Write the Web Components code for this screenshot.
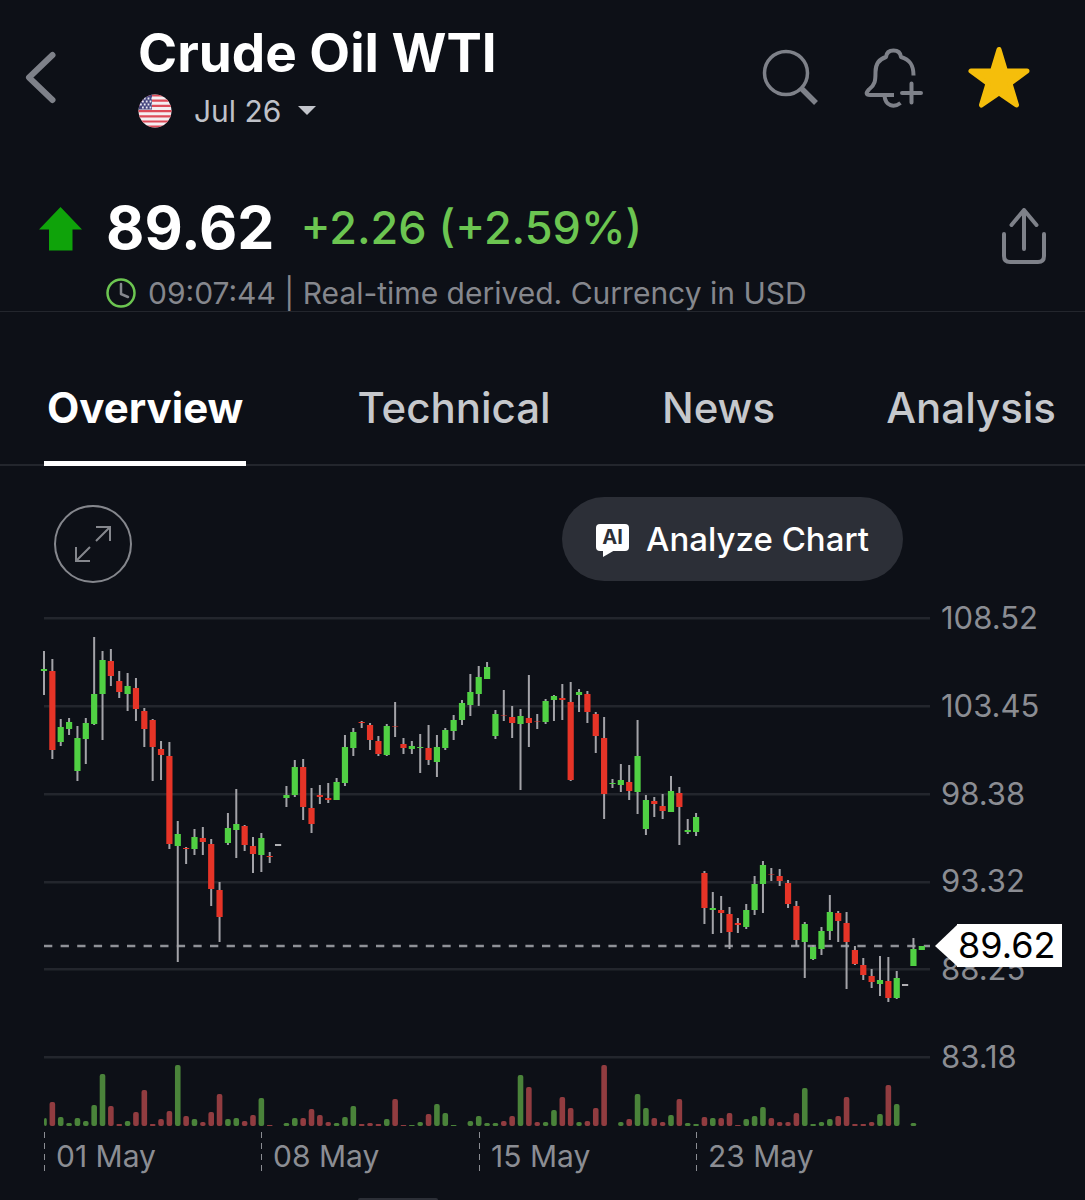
<!DOCTYPE html>
<html lang="en">
<head>
<meta charset="utf-8">
<meta name="viewport" content="width=device-width, initial-scale=1">
<title>Crude Oil WTI</title>
<style>
    body {
        margin: 0;
        background: #0d1017;
        color: #fff;
        font-family: Inter, "Liberation Sans", sans-serif;
    }
</style>
</head>
<body>
<quote-page></quote-page>

<script>
const RESET = `
    * { box-sizing: border-box; }
    button {
        margin: 0;
        padding: 0;
        border: 0;
        background: none;
        color: inherit;
        font: inherit;
        cursor: pointer;
    }
    svg { display: block; }
`;

class InstrumentHeader extends HTMLElement {
    constructor() {
        super();
        this.attachShadow({ mode: 'open' });
    }

    connectedCallback() {
        this.shadowRoot.innerHTML = `
            <style>
                ${RESET}
                :host {
                    display: flex;
                    align-items: center;
                    padding: 20px 55px 20px 24px;
                }
                .back { width: 34px; }
                .title {
                    flex: 1;
                    margin-left: 80px;
                }
                h1 {
                    margin: 0;
                    font-size: 53px;
                    line-height: 66px;
                    font-weight: 700;
                    white-space: nowrap;
                }
                .contract {
                    display: flex;
                    align-items: center;
                    height: 50px;
                    color: #bfc1c8;
                    font-size: 30px;
                    line-height: 36px;
                }
                .contract .flag { margin-right: 22px; }
                .contract .caret { margin-left: 17px; }
                .actions {
                    display: flex;
                    align-items: center;
                    gap: 44px;
                }
            </style>
            <button class="back" aria-label="Back">
                <svg width="34" height="56" viewBox="0 0 34 56" fill="none" stroke="#7e8189" stroke-width="6" stroke-linecap="round" stroke-linejoin="round">
                    <path d="M28.500 5 5 27.500 28.500 50"/>
                </svg>
            </button>
            <div class="title">
                <h1><slot name="name"></slot></h1>
                <button class="contract">
                    <svg class="flag" width="34" height="34" viewBox="0 0 34 34">
                        <clipPath id="round"><circle cx="17" cy="17" r="16.500"/></clipPath>
                        <g clip-path="url(#round)">
                            <path fill="#f4eef1" d="M0 0h34v34H0z"/>
                            <path stroke="#dd4a58" stroke-width="2.200" d="M0 1.500h34M0 6.700h34M0 11.900h34M0 17.100h34M0 22.300h34M0 27.500h34M0 32.700h34"/>
                            <path fill="#46467f" d="M0 0h14v15.500H0z"/>
                            <path stroke="#e8e8f2" stroke-width="1.800" stroke-dasharray="1.800 2" d="M2 4.500h12M4 7.500h10M2 10.500h12M4 13.500h10"/>
                        </g>
                    </svg>
                    <slot name="contract"></slot>
                    <svg class="caret" width="18" height="10" viewBox="0 0 18 10"><path fill="#c3c5cc" d="M0 0h18L9 9z"/></svg>
                </button>
            </div>
            <div class="actions">
                <button aria-label="Search">
                    <svg width="58" height="58" viewBox="0 0 58 58" fill="none" stroke="#7e8189">
                        <circle cx="24" cy="24" r="21.500" stroke-width="3.500"/>
                        <path stroke-width="5.500" d="M39 39 54 54"/>
                    </svg>
                </button>
                <button aria-label="Add alert">
                    <svg width="60" height="62" viewBox="0 0 60 62" fill="none" stroke="#7e8189" stroke-width="4" stroke-linecap="round" stroke-linejoin="round">
                        <path stroke-linecap="butt" d="M49.500 28.500C49.500 18 46 12.500 37 10C36.500 5.500 33.500 3.500 29.500 3.500S22.500 5.500 22 10C14 12.500 11.500 18 11.500 25C11.500 34 11 38 5 42.500C1.500 46 2 48 6 48H30"/>
                        <path stroke-linecap="butt" d="M20.500 49C21.500 59 30 61 36.500 56"/>
                        <path d="M47.500 36.500V55.500M38 46H57"/>
                    </svg>
                </button>
                <button aria-label="Remove from watchlist">
                    <svg width="62" height="64" viewBox="0 0 62 64">
                        <path fill="#f5be0b" stroke="#f5be0b" stroke-width="5" stroke-linejoin="round" d="M31 3.500 37.500 25H59L42 37.500 48.500 59 31 47 13.500 59 20 37.500 3 25H24.500Z"/>
                    </svg>
                </button>
            </div>
        `;
    }
}

class PriceSummary extends HTMLElement {
    constructor() {
        super();
        this.attachShadow({ mode: 'open' });
    }

    connectedCallback() {
        this.shadowRoot.innerHTML = `
            <style>
                ${RESET}
                :host {
                    display: grid;
                    grid-template-columns: 44px 1fr 46px;
                    column-gap: 23px;
                    align-items: center;
                    margin-top: 37px;
                    padding: 0 38px 0 39px;
                    border-bottom: 1px solid #23262d;
                }
                .line {
                    display: flex;
                    align-items: center;
                    height: 72px;
                    padding-bottom: 4px;
                    white-space: nowrap;
                }
                .last {
                    font-size: 59px;
                    font-weight: 700;
                }
                .change {
                    margin-left: 26px;
                    color: #6cc551;
                    font-size: 45px;
                    font-weight: 500;
                }
                .share { margin-top: 14px; }
                .note {
                    grid-column: 2 / 4;
                    display: flex;
                    align-items: center;
                    gap: 12px;
                    height: 36px;
                    margin-top: 10px;
                    color: #85878d;
                    font-size: 30px;
                    line-height: 36px;
                    white-space: nowrap;
                }
            </style>
            <svg width="44" height="44" viewBox="0 0 44 44"><path fill="#0fa30a" d="M21.500 0 43 22.500H33.500V43.500H10V22.500H0Z"/></svg>
            <div class="line">
                <span class="last"><slot name="last"></slot></span>
                <span class="change"><slot name="change"></slot></span>
            </div>
            <button class="share" aria-label="Share">
                <svg width="46" height="58" viewBox="0 0 46 58" fill="none" stroke="#7e8189" stroke-width="4" stroke-linecap="round" stroke-linejoin="round">
                    <path d="M23 42V3M10.500 18 23 3 35.500 18M3 27V49Q3 55 9 55H37Q43 55 43 49V27"/>
                </svg>
            </button>
            <div class="note">
                <svg width="30" height="30" viewBox="0 0 30 30" fill="none">
                    <circle cx="15" cy="15" r="13.500" stroke="#6cc551" stroke-width="2.500"/>
                    <path stroke="#85878d" stroke-width="2.500" stroke-linecap="round" stroke-linejoin="round" d="M15 6V16L22 19"/>
                </svg>
                <slot name="note"></slot>
            </div>
        `;
    }
}

class TabBar extends HTMLElement {
    constructor() {
        super();
        this.attachShadow({ mode: 'open' });
    }

    connectedCallback() {
        this.shadowRoot.innerHTML = `
            <style>
                :host {
                    display: flex;
                    justify-content: space-between;
                    margin-top: 63px;
                    padding: 0 29px 0 44px;
                    box-shadow: inset 0 -2px #23262d;
                }
                ::slotted(a) {
                    height: 91px;
                    box-sizing: border-box;
                    border-bottom: 5px solid transparent;
                    color: #c6c8cc;
                    font-size: 42px;
                    line-height: 66px;
                    font-weight: 500;
                    text-decoration: none;
                }
                ::slotted(a[aria-current]) {
                    padding: 0 3px;
                    border-color: #fff;
                    color: #fff;
                    font-weight: 700;
                }
            </style>
            <slot></slot>
        `;
    }
}

class ChartToolbar extends HTMLElement {
    constructor() {
        super();
        this.attachShadow({ mode: 'open' });
    }

    connectedCallback() {
        this.shadowRoot.innerHTML = `
            <style>
                ${RESET}
                :host {
                    display: flex;
                    justify-content: space-between;
                    align-items: flex-start;
                    padding: 31px 182px 15px 53px;
                }
                .expand { margin-top: 8px; }
                .analyze {
                    display: flex;
                    align-items: center;
                    gap: 17px;
                    height: 84px;
                    padding: 0 34px;
                    border-radius: 42px;
                    background: #2c2f37;
                    font-size: 33px;
                    font-weight: 500;
                    white-space: nowrap;
                }
                .ai {
                    position: relative;
                    width: 33px;
                    height: 27px;
                    margin-bottom: 4px;
                    border-radius: 4px;
                    background: #fff;
                    color: #2c2f37;
                    font-size: 20px;
                    line-height: 27px;
                    font-weight: 700;
                    text-align: center;
                }
                .ai svg {
                    position: absolute;
                    left: 7px;
                    top: 26px;
                }
            </style>
            <button class="expand" aria-label="Full screen">
                <svg width="80" height="80" viewBox="0 0 80 80" fill="none" stroke="#85878d" stroke-width="2">
                    <circle cx="40" cy="39" r="38"/>
                    <path d="M43 36 57 22M43 22H57V36M37 42 23 56M23 42V56H37"/>
                </svg>
            </button>
            <button class="analyze">
                <span class="ai">AI<svg width="12" height="7" viewBox="0 0 12 7"><path fill="#fff" d="M0 0H12L0 7Z"/></svg></span>
                <slot></slot>
            </button>
        `;
    }
}

// direction, high, low, body top, body bottom, volume
// heights are in plot units, counted down from the top of the plot
const CANDLES = [
    ['u', 51, 95, 69, 71, 8], ['d', 59, 159, 71, 150, 24], ['u', 119, 146, 127, 142, 9], ['u', 118, 135, 122, 129, 3],
    ['u', 126, 181, 138, 171, 8], ['u', 118, 164, 123, 139, 5], ['u', 37, 125, 94, 124, 21], ['u', 51, 140, 60, 94, 52],
    ['d', 49, 86, 61, 76, 20], ['d', 71, 98, 81, 92, 2], ['u', 73, 111, 86, 94, 5], ['d', 78, 121, 88, 109, 14],
    ['d', 108, 147, 111, 129, 36], ['d', 119, 181, 120, 147, 2], ['d', 141, 180, 149, 155, 7], ['d', 142, 249, 156, 244, 15],
    ['u', 221, 362, 234, 246, 61], ['d', 247, 264, 248, 249, 10], ['u', 229, 255, 237, 249, 7], ['d', 227, 255, 238, 242, 4],
    ['d', 239, 306, 244, 289, 14], ['d', 282, 342, 290, 317, 32], ['u', 213, 245, 228, 243, 7], ['u', 189, 258, 224, 230, 8],
    ['d', 225, 251, 226, 245, 5], ['d', 237, 273, 246, 254, 11], ['u', 233, 272, 238, 255, 28], ['d', 252, 263, 256, 257, 1],
    ['n', 245, 245, 244, 246, 0], ['u', 186, 207, 195, 198, 3], ['u', 160, 197, 167, 195, 8], ['d', 159, 220, 167, 207, 8],
    ['d', 188, 233, 208, 224, 17], ['d', 185, 204, 195, 197, 11], ['d', 183, 203, 198, 200, 4], ['u', 178, 200, 182, 200, 3],
    ['u', 135, 186, 147, 183, 9], ['u', 128, 156, 132, 148, 20], ['d', 121, 128, 122, 123, 2], ['d', 123, 150, 125, 140, 3],
    ['d', 136, 156, 141, 154, 2], ['u', 124, 156, 126, 155, 7], ['d', 102, 137, 126, 126, 27], ['d', 138, 154, 144, 148, 1],
    ['u', 141, 154, 146, 149, 1], ['u', 134, 173, 147, 148, 4], ['d', 125, 165, 148, 160, 12], ['u', 135, 177, 147, 162, 22],
    ['u', 128, 150, 130, 148, 13], ['u', 115, 140, 120, 131, 1], ['u', 100, 125, 103, 120, 0], ['u', 74, 116, 92, 105, 5],
    ['u', 66, 106, 77, 94, 10], ['u', 62, 79, 67, 79, 3], ['u', 110, 139, 114, 136, 3], ['d', 90, 121, 115, 115, 5],
    ['d', 106, 138, 117, 123, 10], ['u', 109, 190, 116, 124, 51], ['d', 75, 147, 118, 123, 39], ['d', 114, 129, 121, 121, 4],
    ['u', 99, 124, 101, 122, 4], ['u', 95, 121, 96, 100, 16], ['d', 84, 120, 98, 100, 29], ['d', 82, 181, 102, 180, 18],
    ['u', 89, 112, 92, 95, 4], ['d', 91, 123, 94, 112, 5], ['d', 112, 153, 114, 136, 18], ['d', 117, 219, 138, 194, 61],
    ['u', 179, 188, 183, 184, 0], ['u', 164, 192, 180, 185, 4], ['d', 165, 200, 182, 191, 7], ['u', 120, 214, 156, 192, 32],
    ['u', 195, 235, 200, 229, 18], ['d', 197, 217, 201, 204, 8], ['d', 194, 219, 206, 211, 4], ['u', 176, 212, 191, 212, 11],
    ['d', 187, 245, 193, 207, 27], ['u', 219, 234, 230, 232, 3], ['u', 213, 236, 217, 232, 2], ['d', 271, 324, 273, 308, 9],
    ['u', 292, 334, 308, 310, 8], ['d', 296, 333, 310, 313, 8], ['d', 307, 349, 314, 332, 13], ['d', 318, 333, 323, 325, 1],
    ['u', 304, 329, 310, 327, 7], ['u', 276, 315, 284, 310, 10], ['u', 261, 313, 265, 284, 19], ['d', 268, 281, 274, 274, 8],
    ['d', 269, 286, 276, 281, 4], ['d', 280, 308, 283, 304, 4], ['d', 301, 346, 306, 340, 13], ['u', 322, 378, 324, 342, 38],
    ['u', 345, 360, 347, 359, 2], ['u', 327, 355, 331, 349, 4], ['u', 295, 340, 312, 331, 7], ['d', 311, 342, 313, 321, 10],
    ['d', 312, 389, 323, 342, 29], ['d', 346, 365, 350, 364, 2], ['d', 358, 380, 365, 375, 2], ['d', 369, 388, 376, 382, 4],
    ['u', 356, 396, 380, 384, 12], ['d', 357, 402, 381, 398, 41], ['u', 371, 399, 378, 398, 22], ['n', 385, 385, 384, 386, 0],
    ['u', 338, 366, 349, 366, 3], ['u', 346, 350, 346, 350, 0]
];
const GRID = [18, 106, 194, 282, 369, 457];
const STEP = 8.36;
const BASE = 526;
const BODY = { u: '#50d043', d: '#e63427', n: '#b0b0b4' };
const VOLUME = { u: '#4a833a', d: '#913c40' };

class CandleChart extends HTMLElement {
    constructor() {
        super();
        this.attachShadow({ mode: 'open' });
    }

    connectedCallback() {
        const prices = this.getAttribute('prices').split(' ');
        const dates = this.getAttribute('dates').split(',');
        this.shadowRoot.innerHTML = `
            <style>
                ${RESET}
                :host {
                    display: grid;
                    grid-template-columns: 1fr 144px;
                    column-gap: 11px;
                    padding-left: 44px;
                    color: #8b8d93;
                    font-size: 30px;
                    line-height: 36px;
                }
                .plot {
                    width: 100%;
                    height: 530px;
                    overflow: visible;
                }
                .scale {
                    position: relative;
                    display: flex;
                    flex-direction: column;
                    justify-content: space-between;
                    height: 475px;
                    font-size: 31px;
                }
                .last {
                    position: absolute;
                    top: 324px;
                    left: -6px;
                    display: flex;
                    color: #000;
                    font-size: 36px;
                    line-height: 43px;
                }
                .last span {
                    padding: 0 7px 0 1px;
                    background: #fff;
                }
                .dates {
                    display: grid;
                    grid-template-columns: 217fr 218fr 217fr 234fr;
                    padding-top: 2px;
                }
                .dates span {
                    height: 40px;
                    padding-left: 12px;
                    line-height: 48px;
                    background: repeating-linear-gradient(#8b8d93 0 6px, transparent 6px 11px) 0 0 / 1px 100% no-repeat;
                }
            </style>
            <svg class="plot" viewBox="0 0 886 530" preserveAspectRatio="none" role="img" aria-label="Price and volume">
                ${GRID.map(y => `<rect y="${y - 1}" width="886" height="2.500" fill="#23262d"/>`).join('')}
                <path d="M0 346H886" stroke="#8f9197" stroke-width="2.500" stroke-dasharray="8.300 8.300"/>
                ${CANDLES.map((c, i) => this.candle(c, i)).join('')}
            </svg>
            <div class="scale">
                ${prices.map(p => `<span>${p}</span>`).join('')}
                <div class="last">
                    <svg width="22" height="43" viewBox="0 0 22 43"><path fill="#fff" d="M0 22 22 1V42Z"/></svg>
                    <span>${this.getAttribute('last')}</span>
                </div>
            </div>
            <div class="dates">
                ${dates.map(d => `<span>${d}</span>`).join('')}
            </div>
        `;
    }

    candle([dir, high, low, top, bottom, volume], i) {
        const x = i * STEP;
        const height = Math.max(bottom - top, 1);
        const left = i ? x - 2.8 : 0;
        const width = i ? 5.6 : 2.8;
        let out = `<rect x="${x - 1}" y="${high}" width="2" height="${low - high}" fill="#a3a3a8"/>
            <rect x="${x - 3.1}" y="${top}" width="6.200" height="${height}" fill="${BODY[dir]}" opacity="${top === bottom ? 0.5 : 1}"/>`;
        if (volume) {
            out += `<rect x="${left}" y="${BASE - volume}" width="${width}" height="${volume}" rx="${Math.min(2, volume / 2)}" fill="${VOLUME[dir]}"/>`;
        }
        return out;
    }
}

class QuotePage extends HTMLElement {
    constructor() {
        super();
        this.attachShadow({ mode: 'open' });
    }

    connectedCallback() {
        this.shadowRoot.innerHTML = `
            <style>
                :host {
                    display: flex;
                    flex-direction: column;
                    min-height: 100vh;
                    overflow: hidden;
                }
                .handle {
                    width: 80px;
                    height: 2px;
                    margin: auto 0 0 33%;
                    border-radius: 2px 2px 0 0;
                    background: #2c2f37;
                }
            </style>
            <instrument-header>
                <span slot="name">Crude Oil WTI</span>
                <span slot="contract">Jul 26</span>
            </instrument-header>
            <price-summary>
                <span slot="last">89.62</span>
                <span slot="change">+2.26 (+2.59%)</span>
                <span slot="note">09:07:44 | Real-time derived. Currency in USD</span>
            </price-summary>
            <tab-bar>
                <a href="#overview" aria-current="page">Overview</a>
                <a href="#technical">Technical</a>
                <a href="#news">News</a>
                <a href="#analysis">Analysis</a>
            </tab-bar>
            <chart-toolbar>Analyze Chart</chart-toolbar>
            <candle-chart prices="108.52 103.45 98.38 93.32 88.25 83.18" last="89.62" dates="01 May,08 May,15 May,23 May"></candle-chart>
            <div class="handle"></div>
        `;
    }
}

customElements.define('instrument-header', InstrumentHeader);
customElements.define('price-summary', PriceSummary);
customElements.define('tab-bar', TabBar);
customElements.define('chart-toolbar', ChartToolbar);
customElements.define('candle-chart', CandleChart);
customElements.define('quote-page', QuotePage);
</script>
</body>
</html>
